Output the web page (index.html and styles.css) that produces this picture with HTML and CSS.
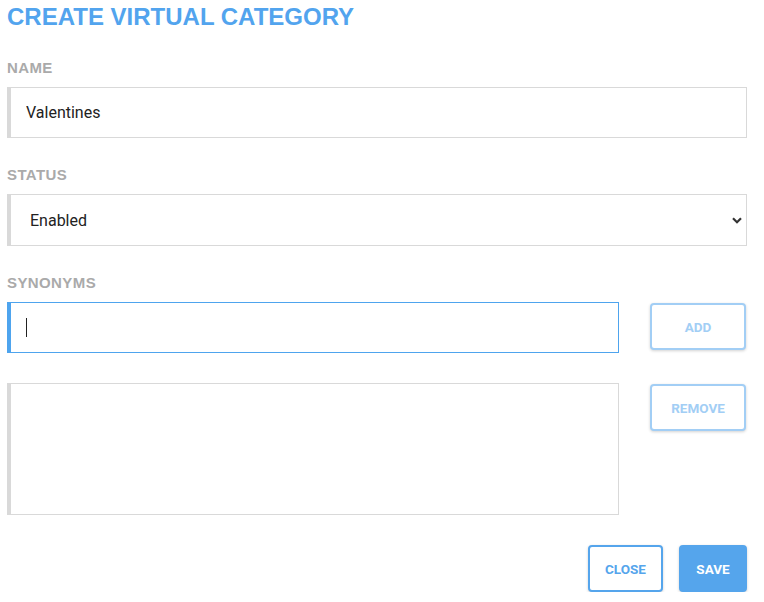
FILE: index.html
```html
<!DOCTYPE html>
<html lang="en">
<head>
    <meta charset="UTF-8">
    <title>Create virtual category</title>
    <link rel="stylesheet" href="styles.css">
</head>
<body>
<div class="dialog">
    <h1 class="title">CREATE VIRTUAL CATEGORY</h1>

    <div class="field">
        <label class="label" for="name">NAME</label>
        <input id="name" class="input" type="text" value="Valentines">
    </div>

    <div class="field">
        <label class="label" for="status">STATUS</label>
        <select id="status" class="input select">
            <option>Enabled</option>
            <option>Disabled</option>
        </select>
    </div>

    <div class="field">
        <label class="label" for="synonym">SYNONYMS</label>
        <div class="row">
            <div class="caret-box">
                <input id="synonym" class="input focus" type="text">
                <span class="caret"></span>
            </div>
            <button class="btn btn-light" disabled>ADD</button>
        </div>
        <div class="row list-row">
            <textarea class="input list"></textarea>
            <button class="btn btn-light remove" disabled>REMOVE</button>
        </div>
    </div>

    <div class="footer">
        <button class="btn btn-outline">CLOSE</button>
        <button class="btn btn-primary">SAVE</button>
    </div>
</div>
</body>
</html>
```

FILE: styles.css
```css
body {
    margin: 0;
    background: #fff;
}

.dialog {
    width: 740px;
    padding: 2px 17px 0 7px;
}

.title {
    margin: 0 0 28px;
    font-family: "Liberation Sans", Arial, sans-serif;
    font-weight: bold;
    font-size: 24px;
    line-height: 30px;
    color: #52a4ee;
}

.field {
    margin-bottom: 29px;
}

.label {
    display: block;
    margin-bottom: 11px;
    font-family: "Liberation Sans", Arial, sans-serif;
    font-weight: bold;
    font-size: 15px;
    line-height: 16px;
    letter-spacing: 0.4px;
    color: #aaaaaa;
}

.input {
    display: block;
    box-sizing: border-box;
    width: 100%;
    height: 51px;
    margin: 0;
    padding: 0 15px;
    border: 1px solid #d9d9d9;
    border-left-width: 4px;
    border-radius: 0;
    outline: none;
    background: #fff;
    font-family: Roboto, "Liberation Sans", sans-serif;
    font-size: 16px;
    color: #222;
}

.select {
    height: 52px;
    padding-left: 19px;
    -webkit-appearance: none;
    appearance: none;
    background-image: url("data:image/svg+xml,%3Csvg xmlns='http://www.w3.org/2000/svg' width='10' height='7' viewBox='0 0 10 7'%3E%3Cpath d='M1 1.2l4 4 4-4' fill='none' stroke='%23333' stroke-width='2.2'/%3E%3C/svg%3E");
    background-repeat: no-repeat;
    background-position: right 4px center;
}

.focus {
    border-color: #4ea4ee;
}

.row {
    display: grid;
    grid-template-columns: 1fr 96px;
    column-gap: 31px;
    align-items: start;
    padding-right: 1px;
}

.list-row {
    margin-top: 30px;
}

.caret-box {
    position: relative;
}

.caret {
    position: absolute;
    left: 19px;
    top: 16px;
    width: 1px;
    height: 19px;
    background: #222;
}

.list {
    height: 132px;
    resize: none;
}

.btn {
    box-sizing: border-box;
    height: 47px;
    padding: 0;
    border: 2px solid #55a5ec;
    border-radius: 4px;
    background: #fff;
    font-family: Roboto, "Liberation Sans", sans-serif;
    font-weight: bold;
    font-size: 13.5px;
    color: #55a5ec;
    box-shadow: 0 1px 3px rgba(0, 0, 0, 0.18);
    cursor: pointer;
}

.btn-light {
    height: 47px;
    margin-top: 1px;
    border-color: #a2cef5;
    color: #a2cef5;
    cursor: default;
}

.remove {
    margin-top: 1px;
}

.footer {
    display: flex;
    justify-content: flex-end;
    gap: 16px;
    margin-top: 30px;
}

.btn-outline {
    width: 75px;
}

.btn-primary {
    width: 68px;
    border-color: #55a5ec;
    background: #55a5ec;
    color: #fff;
}
```
